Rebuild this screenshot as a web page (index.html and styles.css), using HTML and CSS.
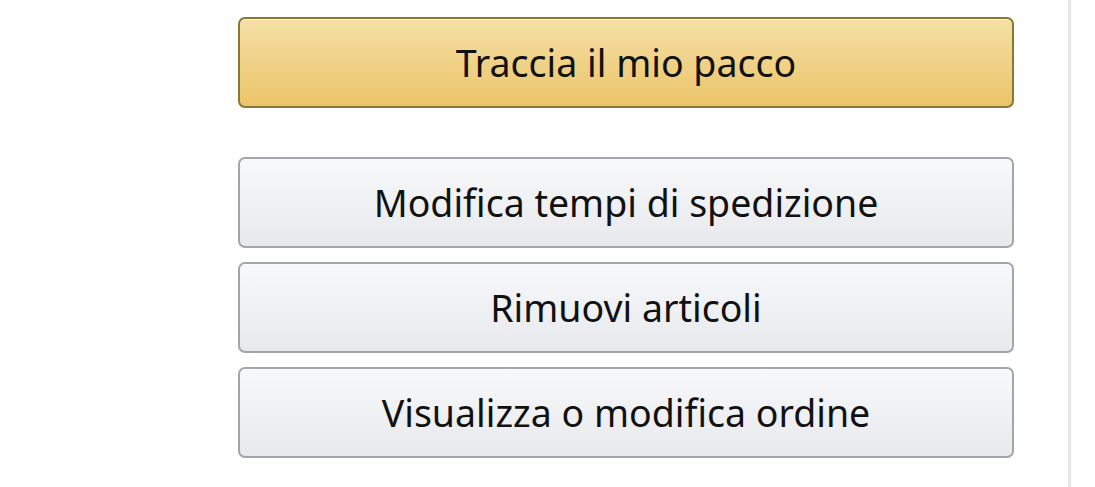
FILE: index.html
```html
<!DOCTYPE html>
<html lang="it">
<head>
    <meta charset="UTF-8">
    <meta name="viewport" content="width=device-width, initial-scale=1.0">
    <title>Il tuo ordine</title>
    <link rel="stylesheet" href="styles.css">
</head>
<body>
    <div class="page">
        <div class="actions">
            <button class="btn btn-primary">Traccia il mio pacco</button>
            <div class="secondary">
                <button class="btn">Modifica tempi di spedizione</button>
                <button class="btn">Rimuovi articoli</button>
                <button class="btn">Visualizza o modifica ordine</button>
            </div>
        </div>
        <!-- divider to the right column -->
        <div class="rail"></div>
    </div>
</body>
</html>
```

FILE: styles.css
```css
body {
    margin: 0;
    background-color: #ffffff;
    font-family: "Noto Sans", "Open Sans", Arial, sans-serif;
    color: #111111;
}

.page {
    display: flex;
    height: 100vh;
}

.actions {
    width: 776px;
    margin-left: 238px;
    padding-top: 17px;
    display: flex;
    flex-direction: column;
}

.secondary {
    margin-top: 49px;
    display: flex;
    flex-direction: column;
    gap: 14px;
}

.btn {
    height: 91px;
    width: 100%;
    border: 2px solid #a2a6ac;
    border-radius: 7px;
    background: linear-gradient(to bottom, #f7f8fa, #e7e9ec);
    font-family: inherit;
    font-size: 37.5px;
    color: #111111;
    box-shadow: inset 0 1px 0 rgba(255, 255, 255, 0.6);
    cursor: pointer;
}

.btn-primary {
    border-color: #8c7634;
    background: linear-gradient(to bottom, #f5e0a7, #ebc468);
}

.rail {
    margin-left: 54px;
    width: 3px;
    background-color: #e7e7e7;
}
```
